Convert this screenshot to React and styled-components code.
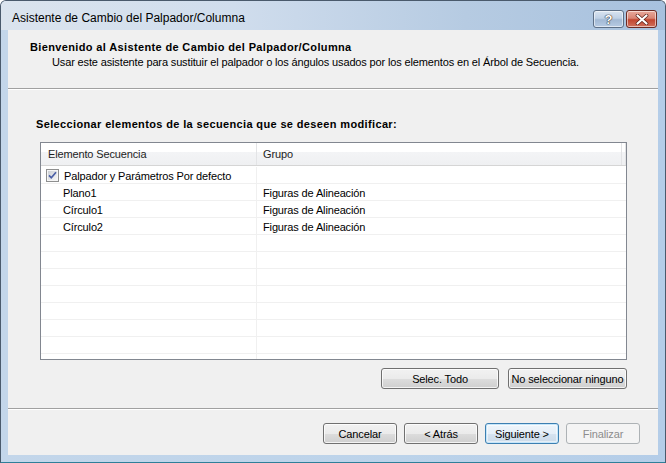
import React from "react";
import styled, { createGlobalStyle } from "styled-components";

const Global = createGlobalStyle`
  html, body { margin: 0; padding: 0; overflow: hidden; background: #ffffff; }
  * { box-sizing: border-box; }
`;

const UI = `"Liberation Sans", Arial, sans-serif`;

const Window = styled.div`
  width: 666px;
  height: 463px;
  display: flex;
  flex-direction: column;
  border: 1px solid #4a5a6c;
  border-bottom-color: #2f7f99;
  border-radius: 6px 6px 0 0;
  background: linear-gradient(90deg, #c3d6ea 0%, #bcd3ea 60%, #b4cde8 100%);
  overflow: hidden;
`;

const TitleBar = styled.div`
  height: 29px;
  flex: none;
  display: flex;
  align-items: flex-start;
  justify-content: space-between;
  padding: 0 8px 0 11px;
  background: linear-gradient(90deg, #dbe4ee 0%, #d0dded 35%, #b6cbe2 70%, #a7c1de 100%);
`;

const Title = styled.div`
  font-family: ${UI};
  font-size: 12px;
  color: #000;
  line-height: 16px;
  padding-top: 9px;
`;

const Caption = styled.div`
  display: flex;
  gap: 2px;
  padding-top: 9px;
`;

const CapButton = styled.div`
  width: ${(p) => p.$w}px;
  height: 18px;
  border: 1px solid ${(p) => (p.$close ? "#6b2a23" : "#5d6f86")};
  border-radius: 3px;
  display: flex;
  align-items: center;
  justify-content: center;
  box-shadow: inset 0 0 0 1px rgba(255, 255, 255, 0.55);
  background: ${(p) =>
    p.$close
      ? "linear-gradient(180deg, #e9a99b 0%, #d98575 45%, #c2452f 55%, #d0705c 100%)"
      : "linear-gradient(180deg, #d9e4f0 0%, #bfd1e6 45%, #a2b9d4 55%, #b7cbe3 100%)"};
  color: #fff;
  font-family: ${UI};
  font-weight: bold;
  font-size: 13px;
  text-shadow: 0 0 1px #333, 0 0 1px #333, 0 0 1px #333;
`;

const Client = styled.div`
  flex: 1;
  margin: 0 7px 7px 7px;
  background: #f0f0f0;
  display: flex;
  flex-direction: column;
  font-family: ${UI};
  font-size: 11px;
  letter-spacing: -0.14px;
  color: #000;
`;

const Header = styled.div`
  height: 58px;
  flex: none;
  padding: 10px 0 0 22px;
  display: flex;
  flex-direction: column;
`;

const HeadTitle = styled.div`
  font-weight: bold;
  letter-spacing: 0.36px;
  line-height: 14px;
`;

const HeadSub = styled.div`
  line-height: 14px;
  padding-left: 22px;
  margin-top: 1px;
`;

const Separator = styled.div`
  height: 2px;
  flex: none;
  border-top: 1px solid #a0a0a0;
  border-bottom: 1px solid #ffffff;
`;

const Body = styled.div`
  flex: 1;
  display: flex;
  flex-direction: column;
  padding: 27px 31px 0 32px;
`;

const SectionLabel = styled.div`
  font-weight: bold;
  letter-spacing: 0.36px;
  line-height: 14px;
  margin-left: -4px;
  margin-bottom: 11px;
`;

const List = styled.div`
  height: 218px;
  border: 1px solid #828790;
  background: #fff;
  display: flex;
  flex-direction: column;
  overflow: hidden;
`;

const HeadRow = styled.div`
  height: 23px;
  flex: none;
  display: grid;
  grid-template-columns: 216px 1fr 4px;
  border-bottom: 1px solid #d5d5d5;
  background: linear-gradient(180deg, #ffffff 0%, #ffffff 40%, #f3f4f6 41%, #eff0f2 100%);
`;

const HeadCell = styled.div`
  display: flex;
  align-items: center;
  padding-left: ${(p) => p.$pad}px;
  border-right: 1px solid #e3e4e6;
  color: #1e1e1e;
  padding-bottom: 1px;
`;

const Rows = styled.div`
  flex: 1;
  overflow: hidden;
  padding-top: 1px;
`;

const Row = styled.div`
  height: 17px;
  display: grid;
  grid-template-columns: 216px 1fr;
  border-bottom: 1px solid #f0f0f0;
`;

const Cell = styled.div`
  display: flex;
  align-items: center;
  padding-left: ${(p) => p.$pad}px;
  padding-top: 1px;
  border-right: ${(p) => (p.$divider ? "1px solid #f0f0f0" : "none")};
  white-space: nowrap;
  gap: 5px;
`;

const ButtonRow = styled.div`
  display: flex;
  justify-content: flex-end;
  gap: 9px;
  margin-top: 8px;
`;

const Button = styled.div`
  width: ${(p) => p.$w}px;
  height: 21px;
  border: 1px solid ${(p) => (p.$disabled ? "#adb2b5" : p.$default ? "#3c7fb1" : "#707070")};
  border-radius: 3px;
  display: flex;
  align-items: center;
  justify-content: center;
  color: ${(p) => (p.$disabled ? "#8d8d8d" : "#000")};
  white-space: nowrap;
  background: ${(p) =>
    p.$disabled
      ? "#f4f4f4"
      : p.$default
      ? "linear-gradient(180deg, #eef5fb 0%, #e6eff8 50%, #d6e3f0 51%, #cbdae9 100%)"
      : "linear-gradient(180deg, #f2f2f2 0%, #ebebeb 50%, #dddddd 51%, #cfcfcf 100%)"};
  box-shadow: ${(p) =>
    p.$disabled
      ? "none"
      : p.$default
      ? "inset 0 0 0 1px #c6e6fa, inset 0 0 0 2px rgba(255,255,255,0.5)"
      : "inset 0 0 0 1px rgba(255,255,255,0.75)"};
`;

const Footer = styled.div`
  height: 45px;
  flex: none;
  display: flex;
  justify-content: flex-end;
  align-items: flex-start;
  gap: 7px;
  padding: 13px 18px 0 0;
`;

const Check = () => (
  <svg width="13" height="13" viewBox="0 0 13 13">
    <defs>
      <linearGradient id="cg" x1="0" y1="0" x2="1" y2="1">
        <stop offset="0" stopColor="#cbcfd5" />
        <stop offset="1" stopColor="#f6f6f6" />
      </linearGradient>
    </defs>
    <rect x="0.5" y="0.5" width="12" height="12" fill="#f6f6f6" stroke="#8e8f8f" />
    <rect x="2" y="2" width="9" height="9" fill="url(#cg)" />
    <path d="M3 6.3 L5.3 8.8 L10 3.2" fill="none" stroke="#4a5fa6" strokeWidth="1.7" />
  </svg>
);

const CloseGlyph = () => (
  <svg width="14" height="11" viewBox="0 0 14 11">
    <path d="M2.5 1.5 L11.5 9.5 M11.5 1.5 L2.5 9.5" stroke="#5a1f17" strokeWidth="3.6" strokeLinecap="round" />
    <path d="M2.5 1.5 L11.5 9.5 M11.5 1.5 L2.5 9.5" stroke="#ffffff" strokeWidth="2.2" strokeLinecap="round" />
  </svg>
);

const items = [
  { name: "Palpador y Parámetros Por defecto", group: "", check: true },
  { name: "Plano1", group: "Figuras de Alineación" },
  { name: "Círculo1", group: "Figuras de Alineación" },
  { name: "Círculo2", group: "Figuras de Alineación" },
];

export default function App() {
  const rows = [...items];
  while (rows.length < 12) rows.push({ name: "", group: "" });
  return (
    <>
      <Global />
      <Window>
        <TitleBar>
          <Title>Asistente de Cambio del Palpador/Columna</Title>
          <Caption>
            <CapButton $w={31}>?</CapButton>
            <CapButton $w={31} $close>
              <CloseGlyph />
            </CapButton>
          </Caption>
        </TitleBar>
        <Client>
          <Header>
            <HeadTitle>Bienvenido al Asistente de Cambio del Palpador/Columna</HeadTitle>
            <HeadSub>
              Usar este asistente para sustituir el palpador o los ángulos usados por los elementos en el Árbol de Secuencia.
            </HeadSub>
          </Header>
          <Separator />
          <Body>
            <SectionLabel>Seleccionar elementos de la secuencia que se deseen modificar:</SectionLabel>
            <List>
              <HeadRow>
                <HeadCell $pad={7}>Elemento Secuencia</HeadCell>
                <HeadCell $pad={6}>Grupo</HeadCell>
                <HeadCell $pad={0} />
              </HeadRow>
              <Rows>
                {rows.map((r, i) => (
                  <Row key={i}>
                    <Cell $pad={r.check ? 5 : 22} $divider>
                      {r.check && <Check />}
                      {r.name}
                    </Cell>
                    <Cell $pad={6}>{r.group}</Cell>
                  </Row>
                ))}
              </Rows>
            </List>
            <ButtonRow>
              <Button $w={118}>Selec. Todo</Button>
              <Button $w={119}>No seleccionar ninguno</Button>
            </ButtonRow>
          </Body>
          <Separator />
          <Footer>
            <Button $w={74}>Cancelar</Button>
            <Button $w={74}>&lt; Atrás</Button>
            <Button $w={74} $default>Siguiente &gt;</Button>
            <Button $w={74} $disabled>Finalizar</Button>
          </Footer>
        </Client>
      </Window>
    </>
  );
}
